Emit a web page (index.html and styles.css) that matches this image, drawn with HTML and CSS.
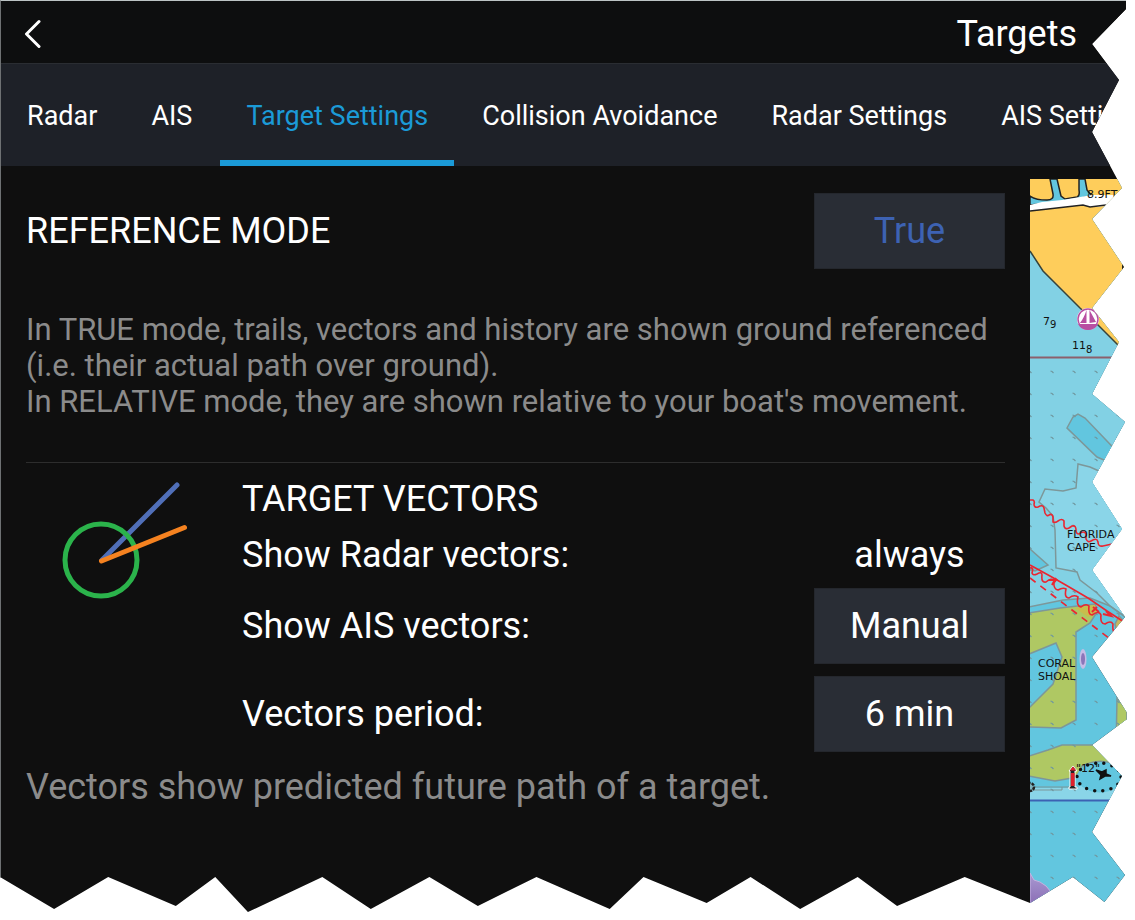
FILE: index.html
```html
<!DOCTYPE html>
<html lang="en">
<head>
<meta charset="utf-8">
<title>Targets</title>
<link rel="stylesheet" href="styles.css">
</head>
<body>
<div class="app">
  <header class="topbar">
    <button class="back" type="button" aria-label="Back">
      <svg width="18" height="30" viewBox="0 0 18 30"><path d="M16 2.500L3.500 15L16 27.500" fill="none" stroke="#fff" stroke-width="3" stroke-linecap="round" stroke-linejoin="round"/></svg>
    </button>
    <h1 class="title">Targets</h1>
  </header>
  <nav class="tabs">
    <a class="tab" href="#radar">Radar</a>
    <a class="tab" href="#ais">AIS</a>
    <a class="tab tab-active" href="#target-settings" aria-current="page">Target Settings</a>
    <a class="tab" href="#collision">Collision Avoidance</a>
    <a class="tab" href="#radar-settings">Radar Settings</a>
    <a class="tab" href="#ais-settings">AIS Settings</a>
  </nav>
  <div class="body">
    <main class="panel">
      <section class="reference">
        <div class="row">
          <h2 class="heading" id="mode-label">REFERENCE MODE</h2>
          <button class="value value-accent" type="button" aria-describedby="mode-label">True</button>
        </div>
        <p class="help">In TRUE mode, trails, vectors and history are shown ground referenced<br>(i.e. their actual path over ground).<br>In RELATIVE mode, they are shown relative to your boat's movement.</p>
      </section>
      <section class="vectors">
        <svg class="vector-icon" width="130" height="122" viewBox="60 480 130 122" fill="none" stroke-linecap="round">
          <path d="M102 560L177 485" stroke="#506fb8" stroke-width="5"/>
          <circle cx="101" cy="560" r="36" stroke="#2bb34b" stroke-width="5"/>
          <path d="M101.500 561L184.500 527.500" stroke="#f58220" stroke-width="5"/>
        </svg>
        <div class="settings">
          <h2 class="heading">TARGET VECTORS</h2>
          <div class="row row-plain">
            <span id="radar-label">Show Radar vectors:</span>
            <span class="static">always</span>
          </div>
          <div class="row">
            <span id="ais-label">Show AIS vectors:</span>
            <button class="value" type="button" aria-describedby="ais-label">Manual</button>
          </div>
          <div class="row row-spaced">
            <span id="period-label">Vectors period:</span>
            <button class="value" type="button" aria-describedby="period-label">6 min</button>
          </div>
        </div>
      </section>
      <p class="note">Vectors show predicted future path of a target.</p>
    </main>
    <aside class="chart">
      <svg class="map" viewBox="1030 179 97 733" preserveAspectRatio="xMinYMin slice">
        <defs>
          <pattern id="ticks" x="1041" y="361" width="22" height="22" patternUnits="userSpaceOnUse">
            <path d="M9.500 10l1.500 .5l1.500 1.500" fill="none" stroke="#6f979f" stroke-width="1.200"/>
          </pattern>
          <linearGradient id="violet" x1="0" y1="0" x2="0" y2="1">
            <stop offset="0" stop-color="#a99ad2"/><stop offset="1" stop-color="#8463ae"/>
          </linearGradient>
        </defs>
        <rect x="1030" y="179" width="97" height="733" fill="#62c6df"/>
        <path d="M1030 251L1043 271L1062 290L1080 308L1098 325L1127 355V617L1110 606L1090 598L1063 600L1030 607Z" fill="#82d1e4"/>
        <path d="M1127 480L1099 471L1090 467L1078 464L1076 488L1063 491L1045 489L1039 502L1046 508L1053 516L1055 530L1056 568L1077 572L1080 580L1097 593L1110 606L1125 617Z" fill="#8ad5e8"/>
        <path d="M1030 179H1127V355L1098 325L1080 308L1062 290L1043 271L1030 251Z" fill="#fecd5b"/>
        <path d="M1030 251L1043 271L1062 290L1080 308L1098 325L1119 346" fill="none" stroke="#35433c" stroke-width="1.500"/>
        <path d="M1030 196Q1036 200 1047 200Q1054 200 1053 194L1050 179H1057L1061 196L1065 199L1077 197Q1080 196 1079 190L1079 179H1085L1087 190L1092 196L1060 202L1030 205Z" fill="#62c6df" stroke="#222" stroke-width="1.500"/>
        <path d="M1030 205L1042 202L1062 200L1092 195L1127 195V203L1110 205L1098 207L1090 207L1083 205L1030 211Z" fill="#fff"/>
        <path d="M1030 211L1048 209L1083 205L1090 207L1106 205" fill="none" stroke="#222" stroke-width="1.500"/>
        <path d="M1030 357.500H1127" stroke="#8c606c" stroke-width="2"/>

        <g fill="#62c6df" stroke="#7d9799" stroke-width="1.500">
          <path d="M1067 428L1073 417L1078 414L1085 418L1127 462L1104 460L1097 457Z"/>
          <path d="M1029 548L1048 565L1035 571L1029 569Z"/>
        </g>
        <path d="M1099 471L1090 467L1078 464L1076 488L1063 491L1045 489L1039 502L1046 508L1053 516L1055 530L1056 568L1077 572L1080 580L1097 593L1110 606L1125 617" fill="none" stroke="#7d9799" stroke-width="1.500"/>
        <g stroke="#7d9799" stroke-width="1.500">
          <path d="M1029 607L1063 600L1090 598L1110 606L1127 618" fill="none"/>
          <path d="M1029 613L1060 608L1095 604L1097 612L1090 623L1076 632V720L1061 728L1029 727V708L1053 684L1062 657L1056 643L1029 654Z" fill="#afc863"/>
          <path d="M1117 698L1127 710V750H1116Z" fill="#afc863"/>
          <path d="M1115 624L1119 616L1127 624L1117 632Z" fill="#c6b75d"/>
          <path d="M1029 756L1048 750L1062 745H1094L1114 762L1127 780L1116 765Q1100 757 1082 766Q1080 775 1072 778L1055 781L1029 776Z" fill="#afc863"/>
        </g>
        <path d="M1030 788H1078L1080 785Q1097 799 1118 787L1127 790V800H1030Z" fill="#8ad5e8"/>
        <path d="M1030 787H1072M1030 790H1062V787" fill="none" stroke="#7d9799"/>
        <path d="M1030 800.500H1127" stroke="#3c62b3" stroke-width="2"/>
        <path d="M1075 608L1095 605L1097 612L1088 617Z" fill="#c9bd4c"/>
        <rect x="1030" y="361" width="97" height="551" fill="url(#ticks)"/>

        <g fill="none" stroke="#ea2631" stroke-width="1.600">
          <path d="M1030 500h3q2 1 1 4q0 4 4 3q5-3 6 1l1 5q2 4 4 2q3-2 4 2v5q3 1 5-1q4-3 6 0v5q1 4 5 2l3-2q4-1 4 4q0 4 3 4q5-4 7 0v5q2 4 5 2q6-4 7 1q0 5 5 4l9-2"/>
          <path d="M1030 565L1050 576L1064 584L1088 598L1107 611L1124 622"/>
          <path d="M1030 568q4-1 2 5q1 3 5 1q5-3 5 1q-1 8 4 7q6-5 8-1q-1 8 4 9q5-3 8-1q-2 9 3 9q5-4 9-1q-2 9 3 10q5-4 8-1q-1 9 3 9q7-5 9 0q-1 9 4 9q6-4 8 0q-1 8 3 10q4-3 6-6"/>
          <path d="M1030 578L1118 645" stroke-dasharray="7 6"/>
          <path d="M1049 580h7l-4 5l4-7m36 34l5-5m-4 0l6 5m4 2l8 2l-5-5" stroke-width="2"/>
        </g>

        <ellipse cx="1083" cy="659" rx="3.500" ry="10" fill="#c7bce6"/>
        <ellipse cx="1083" cy="659" rx="2" ry="6" fill="#8b76b9"/>
        <path d="M1030 873L1034 880L1040 882L1046 886L1051 892L1030 912Z" fill="url(#violet)" stroke="#c3b2df"/>

        <circle cx="1088" cy="319" r="11" fill="#fff"/>
        <circle cx="1088" cy="319" r="10" fill="none" stroke="#b84fa2" stroke-width="1.500"/>
        <path d="M1078 324H1098Q1095 330 1088 330Q1081 330 1078 324ZM1086.500 310V323H1080Q1084 318 1086.500 310ZM1089.500 310L1096 322L1089.500 323Z" fill="#b84fa2"/>

        <circle cx="1030" cy="787" r="4" fill="#7fb3bd" stroke="#222" stroke-width="2.500" stroke-dasharray="3 1"/>
        <ellipse cx="1099" cy="777" rx="22" ry="14" fill="#62c6df" stroke="#111" stroke-width="3.500" stroke-dasharray="0 8.200" stroke-linecap="round"/>
        <path d="M1069 771L1073 766L1077 771H1075V787H1077V789H1069V787H1070V771Z" fill="#222" stroke="#fff"/>
        <path d="M1070 770.500L1073 766.500L1076 770.500ZM1071 773H1074.500V786H1071Z" fill="#e0202b"/>
        <path d="M1096 770L1102 772L1106 770L1106 774L1111 776L1105 776L1100 779L1101 775Z" fill="#111" stroke="#111" stroke-width="1.500"/>
        <path d="M1122 264v6l3-3z" fill="#222"/>

        <g class="map-text">
          <text x="1087" y="198">8.9FT</text>
          <text x="1043" y="325">7<tspan class="map-sub" dy="3">9</tspan></text>
          <text x="1072" y="349">11<tspan class="map-sub" dy="4">8</tspan></text>
          <text x="1067" y="538">FLORIDA</text>
          <text x="1067" y="551">CAPE</text>
          <text x="1038" y="667">CORAL</text>
          <text x="1038" y="680">SHOAL</text>
          <text x="1076" y="772">"12"</text>
        </g>
      </svg>
    </aside>
  </div>
</div>
</body>
</html>
```
FILE: styles.css
```css
* {
  box-sizing: border-box;
}

body {
  margin: 0;
  background: #fff;
  color: #fff;
  font-family: Roboto, "Liberation Sans", sans-serif;
  font-size: 36px;
  line-height: 44px;
}

h1,
h2,
p {
  margin: 0;
  font-size: inherit;
  font-weight: 400;
}

.app {
  display: flex;
  flex-direction: column;
  min-height: calc(100vh - 8px);
  margin: 0 8px 8px 0;
  border-top: 1px solid #bcc3c4;
  border-left: 1px solid #6e7173;
  background: #0f0f0f;
  /* torn paper outline down the right side and along the bottom */
  clip-path: polygon(
    0 0, calc(100% - 1px) 0, calc(100% - 1px) 9px,
    calc(100% - 35px) 44px, calc(100% - 8px) 80px,
    calc(100% - 35px) 132px, calc(100% - 5px) 188px,
    calc(100% - 35px) 219px, calc(100% - 3px) 267px,
    calc(100% - 35px) 308px, calc(100% - 8px) 342px,
    calc(100% - 35px) 394px, calc(100% - 2px) 422px,
    calc(100% - 35px) 482px, calc(100% - 5px) 529px,
    calc(100% - 35px) 570px, calc(100% - 2px) 617px,
    calc(100% - 35px) 657px, 100% 713px, 100% 719px,
    calc(100% - 35px) 745px, calc(100% - 5px) 776px,
    calc(100% - 35px) 832px, calc(100% - 2px) 875px,
    98% calc(100% - 10px), 95.2% calc(100% - 35px),
    91.4% calc(100% - 9px), 85.6% calc(100% - 35px),
    79.6% calc(100% - 6px), 76.1% calc(100% - 35px),
    71% calc(100% - 3px), 66.6% calc(100% - 35px),
    62.7% calc(100% - 9px), 57.1% calc(100% - 35px),
    54.1% calc(100% - 3px), 47.6% calc(100% - 35px),
    42.4% calc(100% - 6px), 38.1% calc(100% - 35px),
    32.9% calc(100% - 3px), 28.6% calc(100% - 35px),
    22% 100%, 19.1% calc(100% - 35px),
    15.6% calc(100% - 6px), 9.6% calc(100% - 35px),
    4.8% calc(100% - 3px), 0 calc(100% - 35px)
  );
}

.topbar {
  display: flex;
  align-items: center;
  justify-content: space-between;
  height: 62px;
  padding: 3px 50px 0 22px;
  background: #0d0e0f;
}

.back {
  display: flex;
  padding: 0;
  border: 0;
  background: none;
}

.tabs {
  display: flex;
  gap: 2px;
  height: 103px;
  overflow: hidden;
  border-top: 1px solid #2a2d32;
  background: #1e2128;
  font-size: 27px;
}

.tab {
  display: flex;
  flex: none;
  align-items: center;
  padding: 8px 26px 0;
  border-bottom: 6px solid transparent;
  color: #fff;
  text-decoration: none;
  white-space: nowrap;
}

.tab-active {
  border-bottom-color: #1b9ad7;
  color: #1b9ad7;
}

.body {
  display: flex;
  flex: 1;
}

.panel {
  flex: 1;
  padding: 26px 25px 0;
}

.row {
  display: flex;
  align-items: center;
  justify-content: space-between;
  padding-top: 1px;
}

.row-plain {
  height: 66px;
}

.row-spaced {
  margin-top: 11px;
}

.value,
.static {
  width: 191px;
  text-align: center;
}

.value {
  height: 76px;
  padding: 0;
  border: 1px solid #24272d;
  background: #292d35;
  color: #fff;
  font: inherit;
}

.value-accent {
  color: #3d62b3;
}

.reference {
  padding-bottom: 42px;
  border-bottom: 1px solid #2d2d2d;
}

.help {
  margin-top: 43px;
  color: #8b8b8b;
  font-size: 31px;
  line-height: 36px;
}

.vectors {
  display: flex;
  justify-content: space-between;
  padding-top: 14px;
}

.vector-icon {
  flex: none;
  margin: 3px 0 0 34px;
}

.settings {
  flex: 1;
  margin-left: 52px;
}

.note {
  margin-top: 13px;
  color: #8b8b8b;
}

.chart {
  display: flex;
  flex: 0 0 97px;
  padding-top: 13px;
}

.map {
  width: 100%;
}

.map-text {
  fill: #111;
  font-family: "DejaVu Sans", sans-serif;
  font-size: 11px;
}

.map-sub {
  font-size: 10px;
}
```
